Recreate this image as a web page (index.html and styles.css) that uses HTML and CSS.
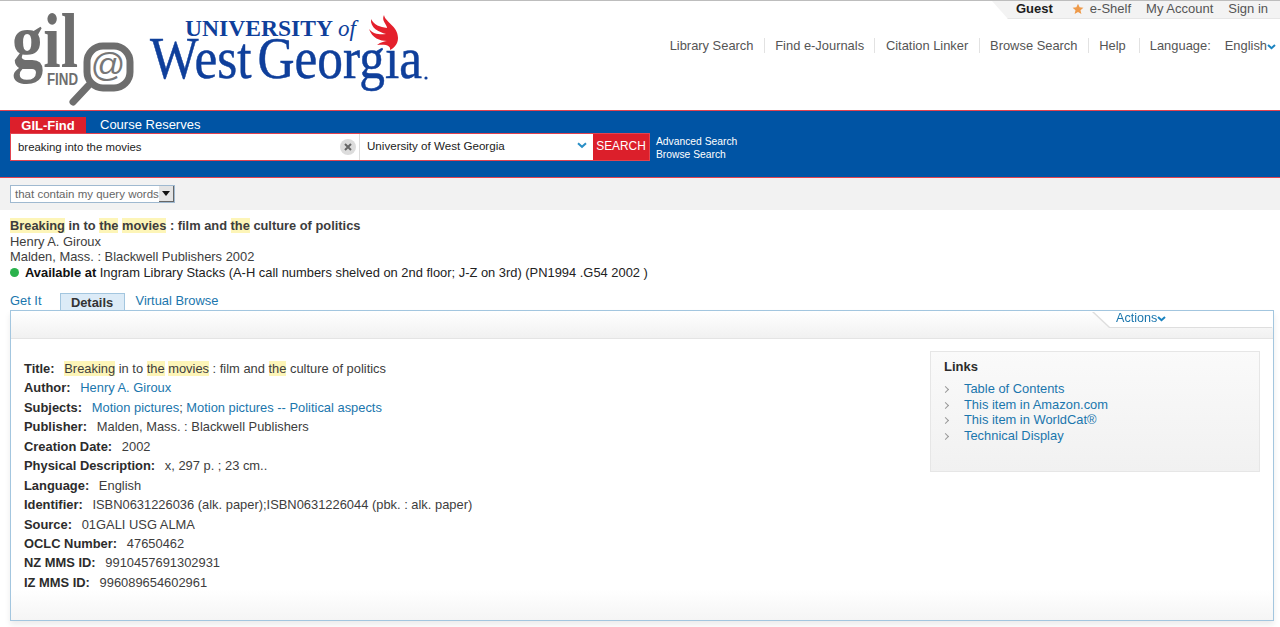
FILE: index.html
```html
<!DOCTYPE html>
<html lang="en">
<head>
<meta charset="utf-8">
<title>GIL-Find</title>
<link rel="stylesheet" href="styles.css">
</head>
<body>
<header class="header">
  <div class="logos">
    <svg class="logo-svg" width="440" height="108" viewBox="0 0 440 108">
      <text x="12" y="66" class="gil" textLength="66" lengthAdjust="spacingAndGlyphs">gil</text>
      <text x="47" y="84" class="find" textLength="31" lengthAdjust="spacingAndGlyphs">FIND</text>
      <rect x="87" y="45" width="43" height="42" rx="16" class="lens"/>
      <text x="108" y="75" class="at">@</text>
      <path d="M88 85 L73 101" class="handle"/>
      <text x="185" y="35" class="univ" textLength="148" lengthAdjust="spacingAndGlyphs">UNIVERSITY</text>
      <text x="338" y="35" class="of">of</text>
      <text x="150" y="77" class="wg" textLength="272" lengthAdjust="spacingAndGlyphs">West Georgia</text>
      <circle cx="426" cy="77" r="1.6" class="dot"/>
      <path d="M384 14C385 21 398 25 398 37 398 43 394 47 390 49 391 45 387 43 377 44 381 41 385 40 387 40 380 40 372 37 369 28 373 33 380 34 386 33 379 31 370 27 371 18 374 24 380 26 387 27 387 23 381 20 384 14Z" class="flame"/>
    </svg>
  </div>
  <div class="head-right">
    <div class="userbar">
      <span class="guest">Guest</span>
      <span class="eshelf"><svg class="star" width="12" height="12" viewBox="0 0 12 12"><path d="M6 .8l1.6 3.5 3.8.4-2.9 2.5.9 3.8L6 8.9 2.6 11l.9-3.8L.6 4.7l3.8-.4z"/></svg>e-Shelf</span>
      <span>My Account</span>
      <span>Sign in</span>
    </div>
    <nav class="mainnav">
      <a class="navlink">Library Search</a>
      <a class="navlink">Find e-Journals</a>
      <a class="navlink">Citation Linker</a>
      <a class="navlink">Browse Search</a>
      <a class="navlink">Help</a>
      <span class="lang">Language:</span>
      <span class="lang-val">English<svg class="chev" width="9" height="6" viewBox="0 0 9 6"><path d="M1 1l3.5 3.2L8 1"/></svg></span>
    </nav>
  </div>
</header>

<section class="searchband">
  <div class="tabs">
    <span class="tab-active">GIL-Find</span>
    <span class="tab">Course Reserves</span>
  </div>
  <div class="searchrow">
    <div class="searchbox">
      <div class="query">
        <span class="query-text">breaking into the movies</span>
        <span class="clear"><svg width="8" height="8" viewBox="0 0 8 8"><path d="M1 1l6 6M7 1L1 7"/></svg></span>
      </div>
      <div class="scope">
        <span>University of West Georgia</span>
        <svg class="scope-chev" width="10" height="7" viewBox="0 0 10 7"><path d="M1 1.2l4 3.6 4-3.6"/></svg>
      </div>
      <span class="go">SEARCH</span>
    </div>
    <div class="adv">
      <span>Advanced Search</span>
      <span>Browse Search</span>
    </div>
  </div>
</section>

<section class="filterband">
  <div class="select"><span class="select-text">that contain my query words</span><span class="select-btn"></span></div>
</section>

<section class="result">
  <div class="r-title"><mark class="hl">Breaking</mark> in to <mark class="hl">the</mark> <mark class="hl">movies</mark> : film and <mark class="hl">the</mark> culture of politics</div>
  <div>Henry A. Giroux</div>
  <div>Malden, Mass. : Blackwell Publishers 2002</div>
  <div class="avail"><span class="greendot"></span><b>Available at</b> Ingram Library Stacks (A-H call numbers shelved on 2nd floor; J-Z on 3rd) (PN1994 .G54 2002 )</div>
</section>

<div class="rtabs">
  <a class="rtab">Get It</a>
  <span class="rtab-active">Details</span>
  <a class="rtab">Virtual Browse</a>
</div>

<section class="panel">
  <div class="panelbar">
    <span class="actions-wrap"><span class="actions">Actions<svg class="chev" width="9" height="6" viewBox="0 0 9 6"><path d="M1 1l3.5 3.2L8 1"/></svg></span></span>
  </div>
  <div class="panelbody">
    <dl class="details">
      <div class="row"><dt>Title:</dt><dd><mark class="hl">Breaking</mark> in to <mark class="hl">the</mark> <mark class="hl">movies</mark> : film and <mark class="hl">the</mark> culture of politics</dd></div>
      <div class="row"><dt>Author:</dt><dd><a class="lnk">Henry A. Giroux</a></dd></div>
      <div class="row"><dt>Subjects:</dt><dd><a class="lnk">Motion pictures</a>; <a class="lnk">Motion pictures -- Political aspects</a></dd></div>
      <div class="row"><dt>Publisher:</dt><dd>Malden, Mass. : Blackwell Publishers</dd></div>
      <div class="row"><dt>Creation Date:</dt><dd>2002</dd></div>
      <div class="row"><dt>Physical Description:</dt><dd>x, 297 p. ; 23 cm..</dd></div>
      <div class="row"><dt>Language:</dt><dd>English</dd></div>
      <div class="row"><dt>Identifier:</dt><dd>ISBN0631226036 (alk. paper);ISBN0631226044 (pbk. : alk. paper)</dd></div>
      <div class="row"><dt>Source:</dt><dd>01GALI USG ALMA</dd></div>
      <div class="row"><dt>OCLC Number:</dt><dd>47650462</dd></div>
      <div class="row"><dt>NZ MMS ID:</dt><dd>9910457691302931</dd></div>
      <div class="row"><dt>IZ MMS ID:</dt><dd>996089654602961</dd></div>
    </dl>
    <aside class="links">
      <h3 class="links-h">Links</h3>
      <ul class="links-list">
        <li>Table of Contents</li>
        <li>This item in Amazon.com</li>
        <li>This item in WorldCat®</li>
        <li>Technical Display</li>
      </ul>
    </aside>
  </div>
</section>
</body>
</html>
```
FILE: styles.css
```css
* { box-sizing: border-box; }
html, body { margin: 0; padding: 0; height: 627px; overflow: hidden; background: #fff; }
body { font-family: "Liberation Sans", Arial, sans-serif; font-size: 12.9px; color: #3a3a3a; }

.header { display: flex; justify-content: space-between; height: 110px; border-top: 1px solid #bdbdbd; }
.logos { height: 108px; }
.logo-svg { display: block; }
.gil { font: 700 78px "Liberation Serif", serif; fill: #6e6e6e; }
.find { font: 700 16px "Liberation Sans", sans-serif; fill: #6e6e6e; }
.lens { fill: #fff; stroke: #6e6e6e; stroke-width: 7; }
.at { font: 400 34px "Liberation Sans", sans-serif; fill: #777; text-anchor: middle; }
.handle { stroke: #6e6e6e; stroke-width: 7; stroke-linecap: round; fill: none; }
.univ { font: 700 23px "Liberation Serif", serif; fill: #0f3f9b; }
.of { font: italic 400 23px "Liberation Serif", serif; fill: #0f3f9b; }
.wg { font: 400 60px "Liberation Serif", serif; fill: #0f3f9b; stroke: #0f3f9b; stroke-width: .5px; word-spacing: -8px; }
.dot { fill: #0f3f9b; }
.flame { fill: #e4202c; }

.head-right { display: flex; flex-direction: column; align-items: flex-end; }
.userbar { display: flex; align-items: center; height: 18px; gap: 15px; padding: 0 12px 2px 24px; background: #f3f3f3; border-bottom: 1px solid #e6e6e6; clip-path: polygon(0 0, 100% 0, 100% 100%, 16px 100%); font-size: 13px; color: #555; }
.guest { font-weight: 700; color: #1c1c1c; margin-right: 4px; }
.eshelf { display: flex; align-items: center; gap: 6px; }
.star { fill: #ee9a4a; }
.mainnav { display: flex; align-items: center; margin-top: 17px; font-size: 12.9px; color: #555; height: 18px; padding-right: 4px; }
.navlink { padding: 0 10.4px; border-right: 1px solid #e2e2e2; line-height: 15px; }
.navlink:last-of-type { padding-right: 13px; }
.lang { margin-left: 10px; }
.lang-val { margin-left: 14px; }
.chev { fill: none; stroke: #1a83c0; stroke-width: 2; }

.searchband { height: 68px; background: #0054a4; border-top: 1px solid #e2434f; border-bottom: 1px solid #e2434f; padding: 6px 0 0 10px; }
.tabs { display: flex; height: 16px; align-items: stretch; }
.tab-active { width: 76px; background: #dc1f2b; color: #fff; font-weight: 700; font-size: 13px; text-align: center; line-height: 18px; }
.tab { color: #fff; font-size: 13px; padding-left: 14px; line-height: 16px; }
.searchrow { display: flex; align-items: flex-start; }
.searchbox { display: flex; width: 640px; height: 28px; background: #fff; border: 1px solid #e2434f; }
.query { width: 349px; display: flex; align-items: center; justify-content: space-between; padding: 0 3px 0 7px; border-right: 1px solid #ddd; font-size: 11.4px; color: #222; }
.clear { width: 16px; height: 16px; border-radius: 50%; background: #dcdcdc; display: flex; align-items: center; justify-content: center; }
.clear path { stroke: #666; stroke-width: 2; fill: none; }
.scope { width: 233px; display: flex; align-items: center; justify-content: space-between; padding: 0 6px 3px 7px; font-size: 11.6px; color: #222; }
.scope-chev { fill: none; stroke: #2a8fc6; stroke-width: 2; }
.go { flex: 1; background: #dc1f2b; color: #fff; text-align: center; font-size: 11.9px; line-height: 25px; }
.adv { display: flex; flex-direction: column; color: #fff; font-size: 10.3px; line-height: 13px; margin-left: 6px; padding-top: 2px; }

.filterband { height: 32px; background: #f2f2f2; padding: 7px 0 0 10px; }
.select { display: flex; width: 165px; height: 18px; background: #fff; border: 1px solid #9fb9d0; align-items: center; justify-content: space-between; color: #666; font-size: 11.5px; padding-left: 4px; }
.select-btn { width: 15px; height: 16px; background: #e4e4e4; position: relative; border-right: 1px solid #666; border-bottom: 1px solid #666; }
.select-btn::after { content: ""; position: absolute; left: 3px; top: 5px; border: 4px solid transparent; border-top: 5px solid #111; border-bottom: 0; }

.result { padding: 8px 0 0 10px; line-height: 15.6px; color: #3d3d3d; height: 83px; }
.r-title { font-weight: 700; font-size: 12.85px; }
.hl { background: #fdf5b8; color: inherit; }
.avail { display: flex; align-items: center; white-space: pre; color: #222; }
.avail b { color: #111; }
.greendot { width: 9px; height: 9px; border-radius: 50%; background: #2bb24c; margin-right: 6px; }

.rtabs { display: flex; padding-left: 10px; height: 17px; align-items: flex-end; color: #1a76ad; }
.rtab { line-height: 16px; padding-bottom: 1px; }
.rtab-active { width: 65px; height: 17px; margin: 0 11px 0 18px; background: #dcebf7; border: 1px solid #a3c6df; border-bottom: 0; color: #333; font-weight: 700; text-align: center; line-height: 17px; }

.panel { margin: 0 6px 0 10px; height: 311px; border: 1px solid #a3c6df; box-shadow: 0 4px 6px rgba(0,0,0,.08); background: linear-gradient(to bottom, #fff 90%, #f5f5f5); }
.panelbar { height: 28px; background: linear-gradient(to bottom, #fff, #f1f1f1); border-bottom: 1px solid #e4e4e4; display: flex; justify-content: flex-end; }
.actions-wrap { display: block; height: 17px; filter: drop-shadow(-1px 1px 0 #dedede); }
.actions { display: block; width: 180px; height: 16px; background: #fff; clip-path: polygon(0 0, 100% 0, 100% 100%, 17px 100%); padding-left: 23px; color: #1a76ad; font-size: 12.6px; line-height: 15px; }
.panelbody { display: flex; justify-content: space-between; padding: 12px 13px 0 13px; }
.details { margin: 0; padding-top: 8px; }
.row { display: flex; line-height: 19.45px; height: 19.45px; color: #3d3d3d; }
.row dt { font-weight: 700; color: #2c2c2c; margin-right: 9.7px; }
.row dd { margin: 0; }
.lnk { color: #1a76ad; }
.links { width: 330px; height: 121px; border: 1px solid #e6e6e6; background: linear-gradient(to bottom, #fafafa, #f1f1f1); padding: 6px 13px; }
.links-h { margin: 0 0 6px; font-size: 13px; line-height: 17px; color: #2c2c2c; }
.links-list { margin: 0; padding: 0 0 0 20px; list-style: none; line-height: 15.6px; color: #1a76ad; }
.links-list li { position: relative; }
.links-list li::before { content: ""; position: absolute; left: -21px; top: 6px; width: 4px; height: 4px; border-top: 1.5px solid #999; border-right: 1.5px solid #999; transform: rotate(45deg); }
```
